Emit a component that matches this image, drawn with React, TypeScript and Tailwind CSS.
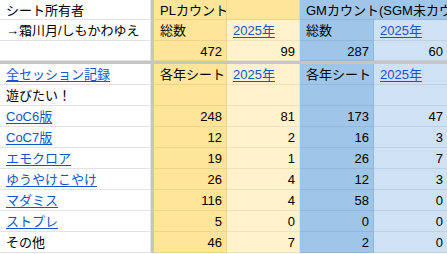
const font = { fontFamily: '"Liberation Sans", Arial, "Noto Sans CJK JP", sans-serif' };

type Tone = "white" | "y1" | "y2" | "b1" | "b2";

const tones: Record<Tone, string> = {
  white: "bg-white border-[#e2e3e3]",
  y1: "bg-[#ffe599] border-[#eed58c]",
  y2: "bg-[#fff2cc] border-[#eee2bd]",
  b1: "bg-[#9fc5e8] border-[#93b7d8]",
  b2: "bg-[#cfe2f3] border-[#bfd1e1]",
};

function Cell({
  tone,
  children,
  right,
  link,
  span,
}: {
  tone: Tone;
  children?: React.ReactNode;
  right?: boolean;
  link?: boolean;
  span?: boolean;
}) {
  return (
    <div
      className={`flex items-center overflow-hidden whitespace-nowrap border-r border-b pl-[6px] pr-[4px] pt-[1px] text-[13px] leading-none ${
        tones[tone]
      } ${right ? "justify-end" : "justify-start"} ${span ? "col-span-2" : ""}`}
    >
      {link ? (
        <span className="text-[#1155cc] underline underline-offset-[2px]">{children}</span>
      ) : (
        <span className="text-black">{children}</span>
      )}
    </div>
  );
}

const Bar = () => <div className="bg-[#c6c6c6]" />;

const rows: [string, boolean, string, string, string, string][] = [
  ["遊びたい！", false, "", "", "", ""],
  ["CoC6版", true, "248", "81", "173", "47"],
  ["CoC7版", true, "12", "2", "16", "3"],
  ["エモクロア", true, "19", "1", "26", "7"],
  ["ゆうやけこやけ", true, "26", "4", "12", "3"],
  ["マダミス", true, "116", "4", "58", "0"],
  ["ストプレ", true, "5", "0", "0", "0"],
  ["その他", false, "46", "7", "2", "0"],
];

export default function App() {
  return (
    <div className="h-[254px] w-[447px] overflow-hidden bg-white" style={font}>
      <div className="grid grid-cols-[151px_3px_73px_73px_74px_74px] grid-rows-[20px_21px_20px_3px_repeat(9,21px)]">
        <Cell tone="white">シート所有者</Cell>
        <Bar />
        <Cell tone="y1">PLカウント</Cell>
        <Cell tone="y1" />
        <Cell tone="b1" span>GMカウント(SGM未カウント)</Cell>

        <Cell tone="white">→霜川月/しもかわゆえ</Cell>
        <Bar />
        <Cell tone="y1">総数</Cell>
        <Cell tone="y2" link>2025年</Cell>
        <Cell tone="b1">総数</Cell>
        <Cell tone="b2" link>2025年</Cell>

        <Cell tone="white" />
        <Bar />
        <Cell tone="y1" right>472</Cell>
        <Cell tone="y2" right>99</Cell>
        <Cell tone="b1" right>287</Cell>
        <Cell tone="b2" right>60</Cell>

        <div className="col-span-6 bg-[#c6c6c6]" />

        <Cell tone="white" link>全セッション記録</Cell>
        <Bar />
        <Cell tone="y1">各年シート</Cell>
        <Cell tone="y2" link>2025年</Cell>
        <Cell tone="b1">各年シート</Cell>
        <Cell tone="b2" link>2025年</Cell>

        {rows.map(([name, link, a, b, c, d]) => (
          <div key={name} className="contents">
            <Cell tone="white" link={link}>{name}</Cell>
            <Bar />
            <Cell tone="y1" right>{a}</Cell>
            <Cell tone="y2" right>{b}</Cell>
            <Cell tone="b1" right>{c}</Cell>
            <Cell tone="b2" right>{d}</Cell>
          </div>
        ))}
      </div>
    </div>
  );
}
